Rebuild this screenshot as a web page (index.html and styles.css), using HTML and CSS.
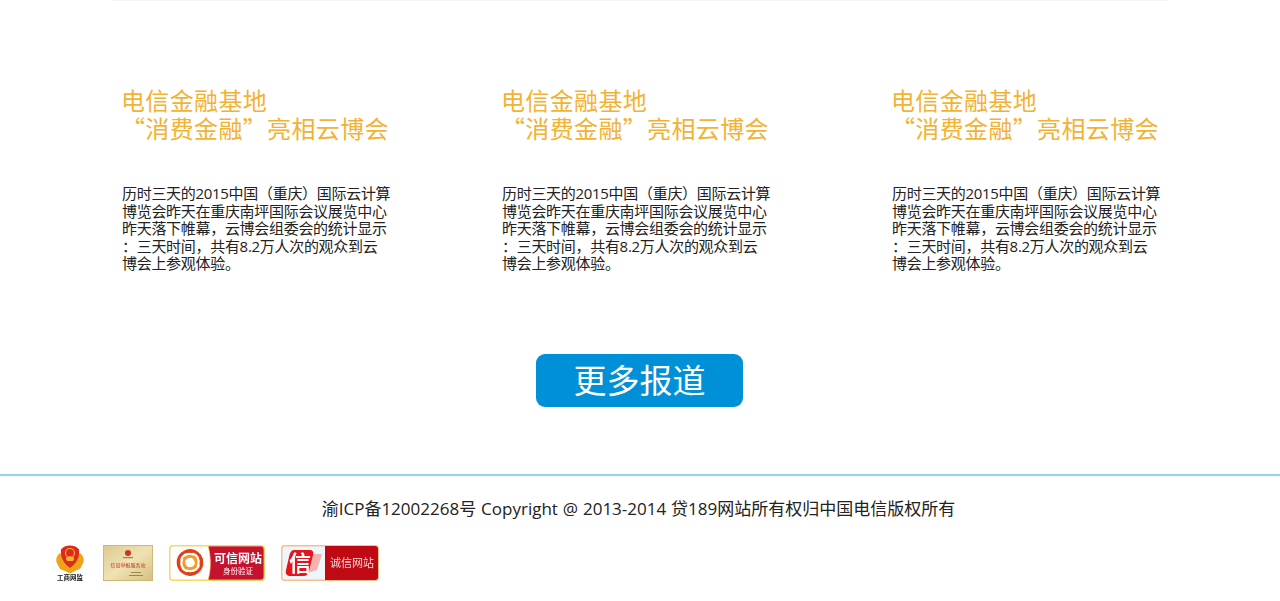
FILE: index.html
```html
<!DOCTYPE html>
<html lang="zh-CN">
<head>
    <meta charset="UTF-8">
    <meta name="viewport" content="width=device-width, initial-scale=1.0">
    <title>媒体报道</title>
    <link rel="stylesheet" href="styles.css">
</head>
<body>
    <div class="top-rule"></div>

    <section class="news">
        <article class="news-item">
            <h3>电信金融基地<br>“消费金融”亮相云博会</h3>
            <p>历时三天的2015中国（重庆）国际云计算<br>博览会昨天在重庆南坪国际会议展览中心<br>昨天落下帷幕，云博会组委会的统计显示<br>：三天时间，共有8.2万人次的观众到云<br>博会上参观体验<span class="stop">。</span></p>
        </article>
        <article class="news-item">
            <h3>电信金融基地<br>“消费金融”亮相云博会</h3>
            <p>历时三天的2015中国（重庆）国际云计算<br>博览会昨天在重庆南坪国际会议展览中心<br>昨天落下帷幕，云博会组委会的统计显示<br>：三天时间，共有8.2万人次的观众到云<br>博会上参观体验<span class="stop">。</span></p>
        </article>
        <article class="news-item">
            <h3>电信金融基地<br>“消费金融”亮相云博会</h3>
            <p>历时三天的2015中国（重庆）国际云计算<br>博览会昨天在重庆南坪国际会议展览中心<br>昨天落下帷幕，云博会组委会的统计显示<br>：三天时间，共有8.2万人次的观众到云<br>博会上参观体验<span class="stop">。</span></p>
        </article>
    </section>

    <div class="more-wrap">
        <a class="more-btn" href="#">更多报道</a>
    </div>

    <footer class="footer">
        <p class="copyright">渝ICP备12002268号 Copyright @ 2013-2014 贷189网站所有权归中国电信版权所有</p>
        <div class="badges">
            <!-- 工商网监 -->
            <svg class="badge badge-gs" viewBox="0 0 30 38" width="30" height="38">
                <path d="M5 8 C1 11 0 16 3 20 C4 24 7 25 10 26 L15 28.5 L20 26 C23 25 26 24 27 20 C30 16 29 11 25 8 L15 22 Z" fill="#eea41a"/>
                <path d="M15 0.5 C19 0.5 22 2 24 4.5 C25 11 22 18 15 23 C8 18 5 11 6 4.5 C8 2 11 0.5 15 0.5 Z" fill="#dd2a1b"/>
                <circle cx="15" cy="8" r="4.5" fill="none" stroke="#f2b53a" stroke-width="1.2"/>
                <path d="M10.5 13 L15 11 L19.5 13 L18 16 H12 Z" fill="#f2b53a"/>
                <text x="15" y="35" class="badge-gs-text">工商网监</text>
            </svg>
            <!-- 金色证书 -->
            <svg class="badge" viewBox="0 0 50 36" width="50" height="36">
                <defs>
                    <linearGradient id="gold" x1="0" y1="0" x2="1" y2="1">
                        <stop offset="0" stop-color="#dcc98c"/>
                        <stop offset="0.5" stop-color="#f0e2b4"/>
                        <stop offset="1" stop-color="#d6c080"/>
                    </linearGradient>
                </defs>
                <rect x="0.5" y="0.5" width="49" height="35" fill="url(#gold)" stroke="#cdb878"/>
                <circle cx="25" cy="8" r="3" fill="#c8352a"/>
                <rect x="20" y="12" width="10" height="1.2" fill="#a8823c"/>
                <text x="25" y="21.5" class="badge-cert-text">信息举报服务站</text>
                <rect x="28" y="27" width="10" height="1" fill="#9a8450"/>
                <rect x="26" y="30" width="14" height="1" fill="#9a8450"/>
            </svg>
            <!-- 可信网站 身份验证 -->
            <svg class="badge" viewBox="0 0 96 36" width="96" height="36">
                <defs>
                    <g id="swirl-blade" fill="none" stroke-linecap="round">
                        <path d="M-4 -11 C4 -14 13 -8 11 2" stroke="#e23f17" stroke-width="3"/>
                        <path d="M-6 -4 C-2 -8 6 -7 6 1" stroke="#f39a2a" stroke-width="2.4"/>
                    </g>
                </defs>
                <rect x="0.75" y="0.75" width="94.5" height="34.5" rx="3" fill="#fff" stroke="#fbd46a" stroke-width="1.5"/>
                <path d="M39 1 H92 a3 3 0 0 1 3 3 V32 a3 3 0 0 1 -3 3 H39 C42 25 42 11 39 1 Z" fill="#c5122f" stroke="#fbd46a" stroke-width="0.8"/>
                <g transform="translate(21 17.5)">
                    <use href="#swirl-blade"/>
                    <use href="#swirl-blade" transform="rotate(90)"/>
                    <use href="#swirl-blade" transform="rotate(180)"/>
                    <use href="#swirl-blade" transform="rotate(270)"/>
                </g>
                <text x="69" y="17.5" class="badge-kx-main">可信网站</text>
                <text x="69" y="29" class="badge-kx-sub">身份验证</text>
            </svg>
            <!-- 诚信网站 -->
            <svg class="badge" viewBox="0 0 98 36" width="98" height="36">
                <rect x="0.75" y="0.75" width="96.5" height="34.5" rx="3" fill="#eef6fb" stroke="#f6bf8c" stroke-width="1.5"/>
                <path d="M44 1 H94 a3 3 0 0 1 3 3 V32 a3 3 0 0 1 -3 3 H44 Z" fill="#bf0a14"/>
                <path d="M31 9 L41 9 L36 25 L27 28 Z" fill="#f3b4b0"/>
                <path d="M13 5 H28 C32 5 33 7 32 10 L28 26 C27 30 25 31 22 31 H10 C6 31 4 29 5 25 L8 12 C9 8 10 5 13 5 Z" fill="#e4141c"/>
                <text x="19" y="26" class="badge-cx-mark">信</text>
                <text x="71" y="22" class="badge-cx-text">诚信网站</text>
            </svg>
        </div>
    </footer>
</body>
</html>
```

FILE: styles.css
```css
* {
    box-sizing: border-box;
}

body {
    margin: 0;
    background-color: #fff;
    color: #222;
    font-family: "Open Sans", "Noto Sans CJK SC", sans-serif;
}

.top-rule {
    height: 1px;
    margin: 0 112px;
    background-color: #f4f4f4;
}

.news {
    display: grid;
    grid-template-columns: 380px 390px 1fr;
    padding: 85px 0 0 122px;
}

.news-item h3 {
    margin: 0 0 0 -1px;
    color: #f3b233;
    font-family: "Noto Sans CJK SC", sans-serif;
    font-size: 24px;
    font-weight: 400;
    line-height: 28px;
    letter-spacing: 0.35px;
}

.news-item p {
    margin: 43px 0 0;
    color: #222;
    font-family: "Open Sans", "Noto Sans CJK TC", sans-serif;
    font-size: 15px;
    line-height: 17.5px;
    letter-spacing: -0.3px;
    white-space: nowrap;
}

/* 句号靠左下，用简体字形 */
.stop {
    font-family: "Noto Sans CJK SC", sans-serif;
    line-height: 1;
}

.more-wrap {
    display: flex;
    justify-content: center;
    padding: 81px 1px 0 0;
}

.more-btn {
    display: block;
    width: 207px;
    height: 53px;
    border-radius: 9px;
    background-color: #0090d7;
    color: #fff;
    font-family: "Noto Sans CJK SC", sans-serif;
    font-size: 33px;
    font-weight: 400;
    line-height: 51px;
    text-align: center;
    text-decoration: none;
}

.footer {
    margin-top: 67px;
    border-top: 2px solid #92d3f0;
}

.copyright {
    margin: 21px 0 0;
    padding-right: 3px;
    color: #222;
    font-size: 17px;
    word-spacing: 0.5px;
    line-height: 24px;
    text-align: center;
}

.badges {
    display: flex;
    align-items: flex-start;
    gap: 16px;
    margin-top: 24px;
    padding-left: 55px;
}

.badge {
    display: block;
    flex: none;
    filter: blur(0.35px);
}

.badge-gs {
    margin-right: 2px;
}

.badge text {
    font-family: "Noto Sans CJK SC", sans-serif;
    text-anchor: middle;
}

.badge .badge-gs-text {
    font-size: 6.5px;
    font-weight: 700;
    fill: #222;
}

.badge .badge-cert-text {
    font-size: 5px;
    fill: #c22a20;
}

.badge .badge-kx-main {
    font-size: 12px;
    font-weight: 700;
    fill: #fff;
}

.badge .badge-kx-sub {
    font-size: 7.5px;
    fill: #fff;
}

.badge .badge-cx-mark {
    font-size: 22px;
    font-weight: 700;
    fill: #fff;
}

.badge .badge-cx-text {
    font-size: 11px;
    fill: #f6d6d6;
}
```
